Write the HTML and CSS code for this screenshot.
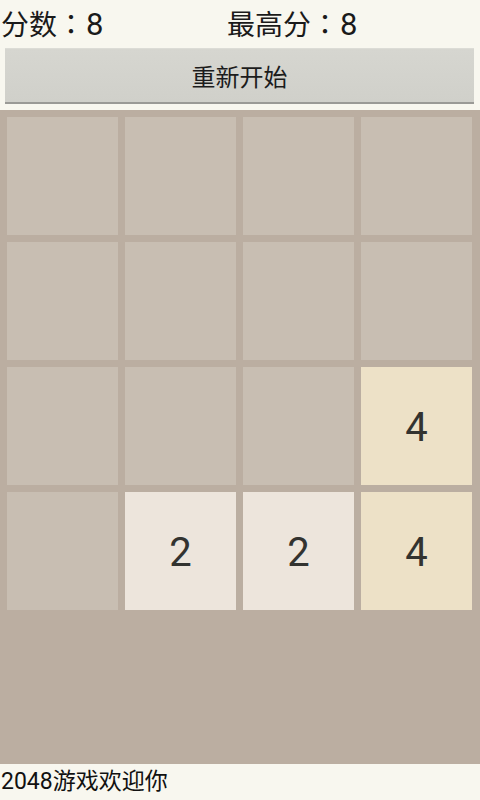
FILE: index.html
```html
<!DOCTYPE html>
<html>
<head>
<meta charset="utf-8">
<link rel="stylesheet" href="styles.css">
</head>
<body>
<div class="app">
  <div class="scores">
    <span class="score">分数<span class="colon">：</span><span class="num">8</span></span>
    <span class="best">最高分<span class="colon">：</span><span class="num">8</span></span>
  </div>
  <div class="btn">重新开始</div>
  <div class="board">
    <div class="grid">
      <div class="tile"></div><div class="tile"></div><div class="tile"></div><div class="tile"></div>
      <div class="tile"></div><div class="tile"></div><div class="tile"></div><div class="tile"></div>
      <div class="tile"></div><div class="tile"></div><div class="tile"></div><div class="tile t4">4</div>
      <div class="tile"></div><div class="tile t2">2</div><div class="tile t2">2</div><div class="tile t4">4</div>
    </div>
  </div>
  <div class="footer">2048游戏欢迎你</div>
</div>
</body>
</html>
```
FILE: styles.css
```css
html, body {
  margin: 0;
  padding: 0;
  background: #f8f7ef;
}
.app {
  width: 480px;
  height: 800px;
  display: flex;
  flex-direction: column;
  font-family: Roboto, "Noto Sans CJK SC", sans-serif;
  color: #1a1a1a;
}
.scores {
  height: 48px;
  display: flex;
  align-items: center;
  font-size: 28px;
  line-height: 46px;
  padding-left: 1px;
}
.score {
  width: 226px;
}
.colon {
  font-family: "Noto Sans CJK JP", sans-serif;
}
.num {
  font-size: 31px;
  margin-left: 1px;
}
.btn {
  margin: 0 6px 0 5px;
  height: 53px;
  border-top: 1px solid #dcdcd6;
  border-bottom: 2px solid #9a9a96;
  background: linear-gradient(#d6d6d0, #d0d0ca);
  display: flex;
  align-items: center;
  justify-content: center;
  font-size: 24px;
  color: #1c1c1c;
}
.board {
  margin-top: 6px;
  height: 654px;
  background: #bbaea1;
  padding: 7px 8px 0 7px;
  box-sizing: border-box;
}
.grid {
  display: grid;
  grid-template-columns: repeat(4, 111px);
  grid-auto-rows: 118px;
  gap: 7px;
}
.tile {
  background: #c8beb2;
  display: flex;
  align-items: center;
  justify-content: center;
  font-size: 40px;
  color: #333330;
  padding-top: 3px;
  box-sizing: border-box;
}
.t2 {
  background: #ede5dc;
}
.t4 {
  background: #ede1c7;
}
.footer {
  flex: 1;
  font-size: 23px;
  line-height: 36px;
  padding-left: 1px;
  color: #111;
}
```
